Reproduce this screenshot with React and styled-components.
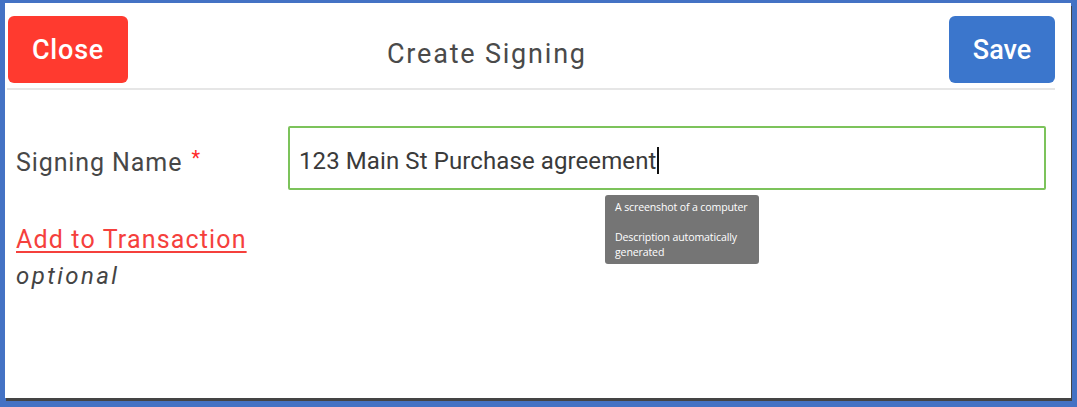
import React from 'react'
import styled, { createGlobalStyle } from 'styled-components'

const GlobalStyle = createGlobalStyle`
  html, body {
    margin: 0;
    padding: 0;
    background: #ffffff;
  }
  body {
    font-family: Roboto, "Liberation Sans", sans-serif;
  }
`

function App() {
  return (
    <Frame>
      <GlobalStyle />
      <Panel>
        <Header>
          <HeaderButton variant="danger">Close</HeaderButton>
          <Title>Create Signing</Title>
          <HeaderButton variant="primary">Save</HeaderButton>
        </Header>

        <Form>
          <Label>
            Signing Name <Required>*</Required>
          </Label>
          <InputWrap>
            <Input>
              123 Main St Purchase agreement
              <Caret />
            </Input>
            <Tooltip>
              <p>A screenshot of a computer</p>
              <p>&nbsp;</p>
              <p>Description automatically</p>
              <p>generated</p>
            </Tooltip>
          </InputWrap>
        </Form>

        <Extra>
          <TransactionLink href="#">Add to Transaction</TransactionLink>
          <Hint>optional</Hint>
        </Extra>
      </Panel>
    </Frame>
  )
}
export default App

const Frame = styled.div`
    width: 1077px;
    height: 407px;
    box-sizing: border-box;
    background: #4472c4;
    padding: 3px 6px 9px 5px;
    display: flex;
`

const Panel = styled.div`
    flex: 1;
    background: #ffffff;
    box-shadow: 1px 3px 0 #444444;
    display: flex;
    flex-direction: column;
`

const Header = styled.div`
    display: flex;
    align-items: center;
    margin: 13px 16px 0 2px;
    padding: 0 0 5px 1px;
    border-bottom: 2px solid #e6e6e6;
`

const HeaderButton = styled.button`
    height: 67px;
    width: ${props => props.variant === 'danger' ? '120px' : '106px'};
    border: none;
    border-radius: 6px;
    background: ${props => props.variant === 'danger' ? '#ff3a2f' : '#3b76cc'};
    color: #ffffff;
    font-family: Roboto, "Liberation Sans", sans-serif;
    font-size: 27px;
    font-weight: 500;
    letter-spacing: ${props => props.variant === 'danger' ? '0.8px' : '0'};
    padding: 0;
    cursor: pointer;
`

const Title = styled.h1`
    flex: 1;
    margin: 0;
    padding: 8px 0 0 259px;
    font-size: 27px;
    font-weight: 400;
    color: #4a4a4a;
    letter-spacing: 1.8px;
`

const Form = styled.div`
    display: grid;
    grid-template-columns: 272px 1fr;
    align-items: center;
    margin: 36px 25px 0 11px;
`

const Label = styled.label`
    font-size: 25px;
    color: #474747;
    letter-spacing: 0.9px;
    padding-top: 6px;
`

const Required = styled.span`
    color: #ff2a2a;
    font-size: 20px;
    vertical-align: 6px;
    margin-left: 2px;
`

const InputWrap = styled.div`
    position: relative;
`

const Input = styled.div`
    height: 64px;
    box-sizing: border-box;
    border: 2px solid #7cc35b;
    border-radius: 2px;
    padding: 5px 10px 0 9px;
    display: flex;
    align-items: center;
    font-size: 24px;
    color: #3a3a3a;
    letter-spacing: 0.1px;
`

const Caret = styled.span`
    display: inline-block;
    width: 1.5px;
    height: 27px;
    background: #111111;
    margin-left: 1px;
`

const Tooltip = styled.div`
    position: absolute;
    left: 317px;
    top: 69px;
    width: 154px;
    height: 69px;
    box-sizing: border-box;
    padding: 5px 10px 0;
    background: #757575;
    border-radius: 3px;
    color: #ffffff;
    font-family: "Open Sans", sans-serif;
    font-size: 10.6px;
    line-height: 15px;
    letter-spacing: -0.15px;
    white-space: nowrap;

    p {
        margin: 0;
    }
`

const Extra = styled.div`
    display: flex;
    flex-direction: column;
    align-items: flex-start;
    margin: 35px 0 0 11px;
    gap: 8px;
`

const TransactionLink = styled.a`
    font-size: 25px;
    color: #f5403c;
    text-decoration: underline;
    text-decoration-thickness: 2px;
    text-underline-offset: 3px;
    letter-spacing: 1.15px;
`

const Hint = styled.span`
    font-size: 24px;
    font-style: italic;
    color: #444444;
    letter-spacing: 2.4px;
`
